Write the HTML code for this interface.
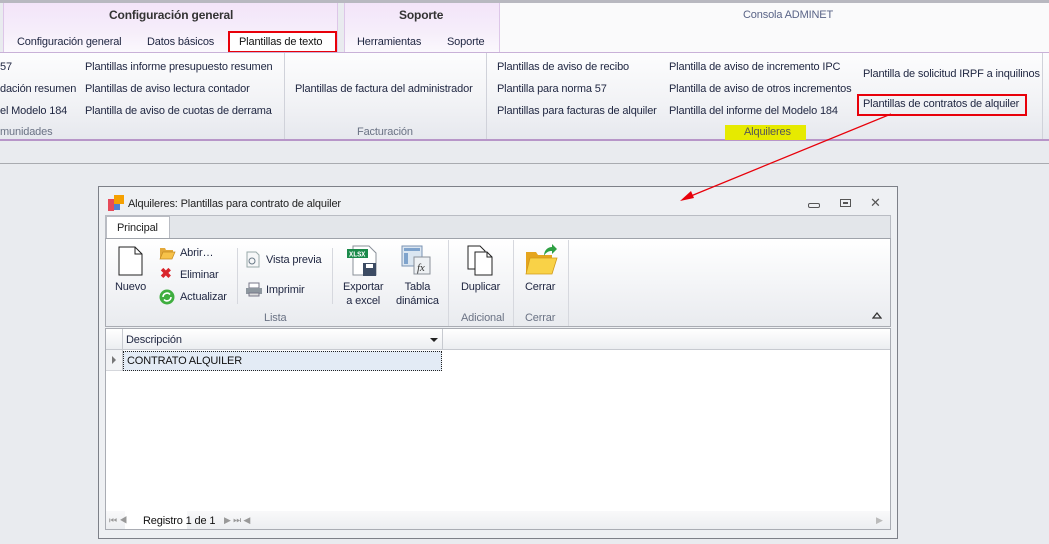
<!DOCTYPE html>
<html><head><meta charset="utf-8"><style>
*{margin:0;padding:0;box-sizing:border-box}
body{width:1049px;height:544px;overflow:hidden;background:#e9ebef;font-family:"Liberation Sans",sans-serif;font-size:11px;letter-spacing:-0.15px;color:#1e2540;position:relative}
.a{position:absolute;white-space:nowrap;line-height:14px}
.b{position:absolute}
.g{color:#6a7284}
</style></head><body>
<div class="b" style="left:0;top:0;width:1049px;height:3px;background:#b8b8c0"></div>
<div class="b" style="left:3px;top:3px;width:335px;height:49px;background:linear-gradient(#f3e4f9,#f6eefa 60%,#fbf8fd);border-left:1px solid #ddc6e8;border-right:1px solid #ddc6e8"></div>
<div class="b" style="left:344px;top:3px;width:156px;height:49px;background:linear-gradient(#f3e4f9,#f6eefa 60%,#fbf8fd);border-left:1px solid #ddc6e8;border-right:1px solid #ddc6e8"></div>
<div class="b" style="left:500px;top:3px;width:549px;height:49px;background:#fafafb"></div>
<div class="a" style="left:109px;top:8px;font-weight:bold;font-size:12px;color:#333">Configuración general</div>
<div class="a" style="left:399px;top:8px;font-weight:bold;font-size:12px;color:#333">Soporte</div>
<div class="a" style="left:743px;top:8px;color:#5a6487">Consola ADMINET</div>
<div class="a" style="left:17px;top:35px">Configuración general</div>
<div class="a" style="left:147px;top:35px">Datos básicos</div>
<div class="b" style="left:228px;top:31px;width:109px;height:22px;border:2px solid #e8000a;background:#fff"></div>
<div class="a" style="left:239px;top:35px;color:#111">Plantillas de texto</div>
<div class="a" style="left:357px;top:35px">Herramientas</div>
<div class="a" style="left:447px;top:35px">Soporte</div>
<div class="b" style="left:0;top:52px;width:1049px;height:89px;background:linear-gradient(#fdfdfe,#f1f2f5 60%,#e6e8ee);border-top:1px solid #c9b1d8;border-bottom:2px solid #b795c8"></div>
<div class="b" style="left:284px;top:53px;width:1px;height:86px;background:#d0d2da"></div>
<div class="b" style="left:486px;top:53px;width:1px;height:86px;background:#d0d2da"></div>
<div class="b" style="left:1042px;top:53px;width:1px;height:86px;background:#d0d2da"></div>
<div class="a" style="left:0;top:60px">57</div>
<div class="a" style="left:0;top:82px">dación resumen</div>
<div class="a" style="left:0;top:104px">el Modelo 184</div>
<div class="a g" style="left:0;top:125px">munidades</div>
<div class="a" style="left:85px;top:60px">Plantillas informe presupuesto resumen</div>
<div class="a" style="left:85px;top:82px">Plantillas de aviso lectura contador</div>
<div class="a" style="left:85px;top:104px">Plantilla de aviso de cuotas de derrama</div>
<div class="a" style="left:295px;top:82px">Plantillas de factura del administrador</div>
<div class="a g" style="left:357px;top:125px">Facturación</div>
<div class="a" style="left:497px;top:60px">Plantillas de aviso de recibo</div>
<div class="a" style="left:497px;top:82px">Plantilla para norma 57</div>
<div class="a" style="left:497px;top:104px">Plantillas para facturas de alquiler</div>
<div class="a" style="left:669px;top:60px">Plantilla de aviso de incremento IPC</div>
<div class="a" style="left:669px;top:82px">Plantilla de aviso de otros incrementos</div>
<div class="a" style="left:669px;top:104px">Plantilla del informe del Modelo 184</div>
<div class="b" style="left:725px;top:125px;width:81px;height:15px;background:#e6ea00"></div>
<div class="a g" style="left:744px;top:125px;color:#555">Alquileres</div>
<div class="a" style="left:863px;top:67px">Plantilla de solicitud IRPF a inquilinos</div>
<div class="b" style="left:857px;top:94px;width:170px;height:22px;border:2px solid #e8000a"></div>
<div class="a" style="left:863px;top:97px">Plantillas de contratos de alquiler</div>
<div class="b" style="left:0;top:163px;width:1049px;height:1px;background:#a9abb0"></div>
<!-- dialog -->
<div class="b" style="left:98px;top:186px;width:800px;height:353px;background:#eef0f3;border:1px solid #7d8088"></div>
<div class="b" style="left:108px;top:199px;width:6px;height:12px;background:#e64a5a"></div>
<div class="b" style="left:114px;top:195px;width:10px;height:9px;background:#f5a000"></div>
<div class="b" style="left:114px;top:204px;width:6px;height:6px;background:#4f7fd0"></div>
<div class="a" style="left:128px;top:197px;color:#222">Alquileres: Plantillas para contrato de alquiler</div>
<div class="b" style="left:808px;top:203px;width:12px;height:5px;border:1px solid #555;border-radius:2px"></div>
<div class="b" style="left:840px;top:199px;width:11px;height:8px;border:1px solid #555"></div>
<div class="b" style="left:843px;top:202px;width:5px;height:2px;border:1px solid #555"></div>
<div class="a" style="left:870px;top:196px;font-size:13px;color:#555">✕</div>
<div class="b" style="left:105px;top:215px;width:786px;height:24px;background:#e3e6ea;border:1px solid #b9bcc3;border-bottom:none"></div>
<div class="b" style="left:106px;top:216px;width:64px;height:24px;background:#fff;border:1px solid #b9bcc3;border-bottom:none"></div>
<div class="a" style="left:117px;top:221px;color:#222">Principal</div>
<div class="b" style="left:105px;top:238px;width:786px;height:89px;background:linear-gradient(#fff,#f4f5f7 50%,#e9ebef);border:1px solid #a9acb3;border-top:1px solid #9fa3aa"></div>
<div class="b" style="left:448px;top:240px;width:1px;height:86px;background:#d6d8de"></div>
<div class="b" style="left:513px;top:240px;width:1px;height:86px;background:#d6d8de"></div>
<div class="b" style="left:568px;top:240px;width:1px;height:86px;background:#d6d8de"></div>
<div class="b" style="left:237px;top:248px;width:1px;height:56px;background:#d6d8de"></div>
<div class="b" style="left:332px;top:248px;width:1px;height:56px;background:#d6d8de"></div>
<svg class="b" style="left:118px;top:246px" width="26" height="30"><path d="M1 1H17L24 8V29H1Z" fill="#fff" stroke="#222"/><path d="M17 1V8H24" fill="none" stroke="#222"/></svg>
<div class="a" style="left:115px;top:280px">Nuevo</div>
<svg class="b" style="left:159px;top:246px" width="17" height="14"><path d="M1 2H6L7 4H14V6H4L1 13Z" fill="#e3a83a"/><path d="M4 6H16L13 13H1Z" fill="#f7c24a" stroke="#c48a20" stroke-width=".7"/></svg>
<div class="a" style="left:180px;top:246px">Abrir…</div>
<div class="a" style="left:160px;top:266px;color:#d9262c;font-weight:bold;font-size:14px">✖</div>
<div class="a" style="left:180px;top:268px">Eliminar</div>
<svg class="b" style="left:159px;top:289px" width="16" height="16"><circle cx="8" cy="8" r="7.5" fill="#3fae3f"/><path d="M4 8a4 4 0 0 1 7-2.5M12 8a4 4 0 0 1-7 2.5" stroke="#fff" stroke-width="1.6" fill="none"/></svg>
<div class="a" style="left:180px;top:290px">Actualizar</div>
<svg class="b" style="left:246px;top:251px" width="14" height="17"><path d="M1 1H10L13 4V16H1Z" fill="#f6f7f8" stroke="#9aa"/><circle cx="6" cy="10" r="3" fill="none" stroke="#6a7a88"/></svg>
<div class="a" style="left:266px;top:253px">Vista previa</div>
<svg class="b" style="left:245px;top:282px" width="18" height="15"><path d="M4 1H14V6H4Z" fill="#fff" stroke="#778"/><path d="M1 6H17V12H1Z" fill="#8e979f"/><path d="M4 11H14V14H4Z" fill="#ddd" stroke="#778"/></svg>
<div class="a" style="left:266px;top:283px">Imprimir</div>
<div class="a g" style="left:264px;top:311px">Lista</div>
<svg class="b" style="left:347px;top:245px" width="32" height="32"><path d="M6 1H22L29 8V30H6Z" fill="#fff" stroke="#8a9099"/><rect x="0" y="4" width="21" height="9" fill="#1b8a4a"/><text x="2" y="11.5" font-size="7" font-family="Liberation Mono" font-weight="bold" fill="#fff">XLSX</text><rect x="16" y="18" width="13" height="13" fill="#3c4b63"/><rect x="19" y="19" width="7" height="4" fill="#fff"/></svg>
<div class="a" style="left:343px;top:280px;text-align:center">Exportar<br>a excel</div>
<svg class="b" style="left:401px;top:245px" width="30" height="30"><rect x="1" y="1" width="20" height="20" fill="#dbe6f1" stroke="#7a93b3"/><rect x="3" y="3" width="16" height="3" fill="#7fa3cc"/><rect x="3" y="8" width="4" height="11" fill="#7fa3cc"/><rect x="13" y="12" width="16" height="17" fill="#eef1f4" stroke="#8a9099"/><text x="16" y="26" font-size="11" font-style="italic" font-family="Liberation Serif" fill="#333">fx</text></svg>
<div class="a" style="left:396px;top:280px;text-align:center">Tabla<br>dinámica</div>
<svg class="b" style="left:467px;top:245px" width="28" height="32"><path d="M1 1H13L18 6V24H1Z" fill="#fff" stroke="#222"/><path d="M8 7H20L25 12V30H8Z" fill="#fff" stroke="#222"/><path d="M20 7V12H25" fill="none" stroke="#222"/></svg>
<div class="a" style="left:461px;top:280px">Duplicar</div>
<svg class="b" style="left:524px;top:244px" width="34" height="32"><path d="M2 8H12L14 11H28V28H2Z" fill="#e5a51e"/><path d="M6 14H33L28 30H2Z" fill="#f9d247" stroke="#d19a1a" stroke-width=".8"/><path d="M20 12C20 6 24 3 28 3V0L33 5L28 10V7C25 7 22 8 20 12Z" fill="#2ea043"/></svg>
<div class="a" style="left:525px;top:280px">Cerrar</div>
<div class="a g" style="left:461px;top:311px">Adicional</div>
<div class="a g" style="left:525px;top:311px">Cerrar</div>
<svg class="b" style="left:872px;top:311px" width="10" height="8"><path d="M1 7L5 2L9 7Z" fill="none" stroke="#333" stroke-width="1.3"/></svg>
<div class="b" style="left:105px;top:328px;width:786px;height:202px;background:#fff;border:1px solid #a9acb3"></div>
<div class="b" style="left:106px;top:329px;width:784px;height:21px;background:linear-gradient(#fff,#eceef1);border-bottom:1px solid #c7cad0"></div>
<div class="b" style="left:122px;top:329px;width:1px;height:42px;background:#c7cad0"></div>
<div class="b" style="left:442px;top:329px;width:1px;height:21px;background:#c7cad0"></div>
<div class="a" style="left:126px;top:333px">Descripción</div>
<svg class="b" style="left:430px;top:338px" width="8" height="5"><path d="M0 0H8L4 4Z" fill="#222"/></svg>
<div class="b" style="left:106px;top:350px;width:16px;height:21px;background:#f2f3f5;border-bottom:1px solid #d5d7dc"></div>
<svg class="b" style="left:112px;top:356px" width="5" height="8"><path d="M0 0L4 4L0 8Z" fill="#777"/></svg>
<div class="b" style="left:123px;top:351px;width:319px;height:20px;background:#e3ebf5;border:1px dotted #222"></div>
<div class="a" style="left:127px;top:354px;color:#111">CONTRATO ALQUILER</div>
<div class="b" style="left:106px;top:511px;width:784px;height:18px;background:linear-gradient(#f9f9fa,#eceef1)"></div>
<div class="b" style="left:125px;top:511px;width:62px;height:18px;background:#fff"></div>
<div class="a" style="left:109px;top:513px;font-size:9px;color:#999">⏮ ◀</div>
<div class="a" style="left:143px;top:514px;color:#111">Registro 1 de 1</div>
<div class="a" style="left:224px;top:513px;font-size:9px;color:#999">▶ ⏭ ◀</div>
<div class="a" style="left:876px;top:513px;font-size:9px;color:#bbb">▶</div>
<svg class="b" style="left:0;top:0" width="1049" height="544"><line x1="891" y1="114" x2="686" y2="198" stroke="#e8000a" stroke-width="1.3"/><polygon points="680,201 691,191 694,198" fill="#e8000a"/></svg>
</body></html>
